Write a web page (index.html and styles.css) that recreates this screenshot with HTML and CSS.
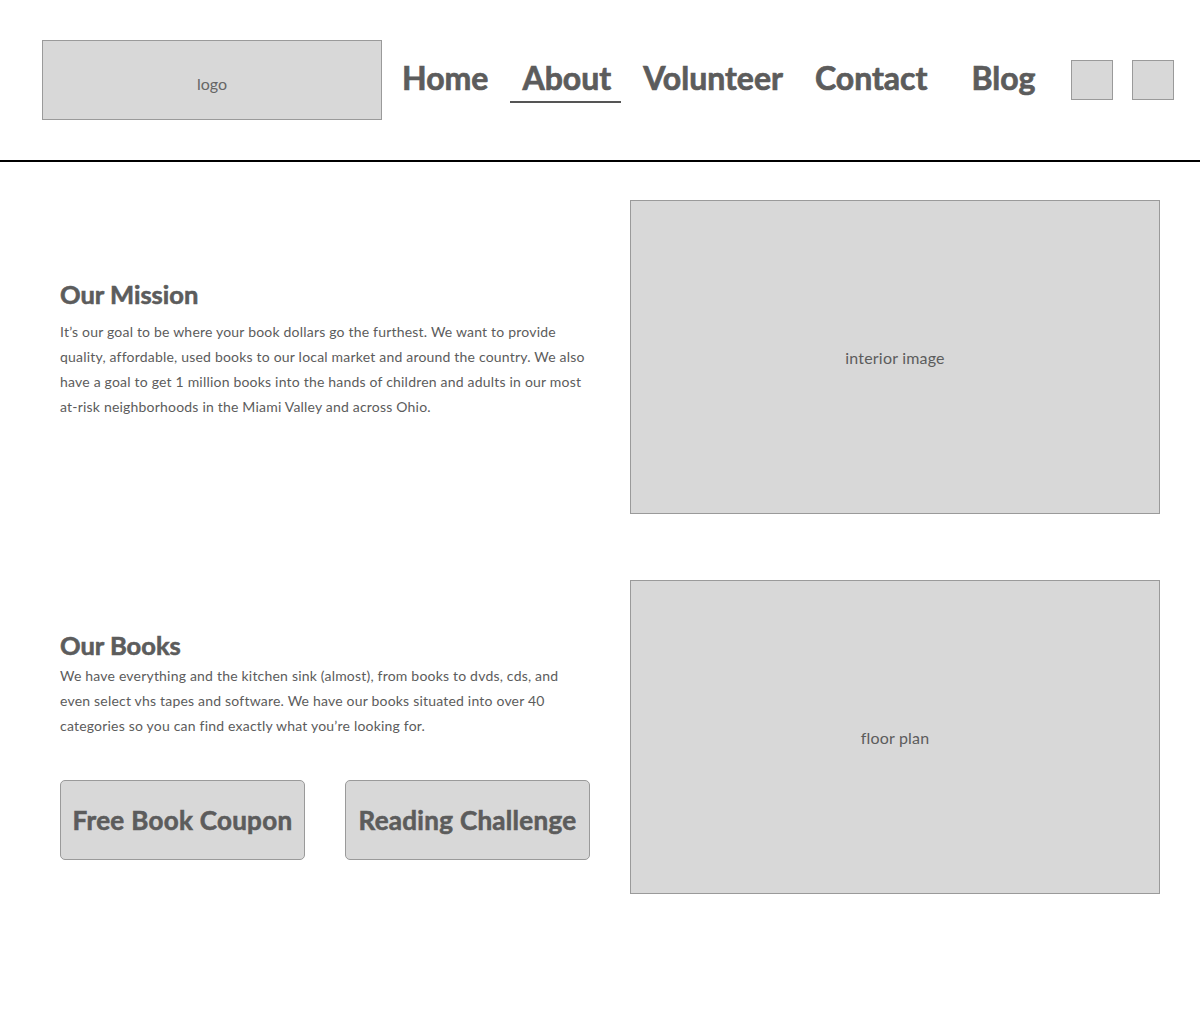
FILE: index.html
```html
<!DOCTYPE html>
<html lang="en">
<head>
<meta charset="utf-8">
<title>About</title>
<link rel="stylesheet" href="styles.css">
</head>
<body>
<header class="header">
  <div class="logo">logo</div>
  <nav class="nav">
    <a class="nav-link" href="#">Home</a>
    <a class="nav-link active" href="#">About</a>
    <a class="nav-link" href="#">Volunteer</a>
    <a class="nav-link" href="#">Contact</a>
    <a class="nav-link blog" href="#">Blog</a>
  </nav>
  <div class="icons">
    <span class="icon-box"></span>
    <span class="icon-box"></span>
  </div>
</header>
<main class="main">
  <section class="row row-mission">
    <div class="text text-mission">
      <h2 class="heading">Our Mission</h2>
      <p class="para">It’s our goal to be where your book dollars go the furthest. We want to provide quality, affordable, used books to our local market and around the country. We also have a goal to get 1 million books into the hands of children and adults in our most at-risk neighborhoods in the Miami Valley and across Ohio.</p>
    </div>
    <div class="placeholder">interior image</div>
  </section>
  <section class="row row-books">
    <div class="text text-books">
      <h2 class="heading heading-tight">Our Books</h2>
      <p class="para">We have everything and the kitchen sink (almost), from books to dvds, cds, and even select vhs tapes and software. We have our books situated into over 40 categories so you can find exactly what you’re looking for.</p>
      <div class="buttons">
        <a class="btn" href="#">Free Book Coupon</a>
        <a class="btn" href="#">Reading Challenge</a>
      </div>
    </div>
    <div class="placeholder">floor plan</div>
  </section>
</main>
</body>
</html>
```

FILE: styles.css
```css
* { box-sizing: border-box; }
html, body { margin: 0; padding: 0; background: #fff; }
body {
  font-family: "Lato", "Noto Sans", sans-serif;
  color: #5c5c5c;
  width: 1200px;
}
.header {
  height: 162px;
  border-bottom: 2px solid #000;
  display: flex;
  align-items: flex-start;
  padding: 40px 26px 0 42px;
}
.logo {
  width: 340px;
  height: 80px;
  background: #d8d8d8;
  border: 1px solid #9a9a9a;
  display: flex;
  align-items: center;
  justify-content: center;
  padding-top: 6px;
  font-size: 16px;
  color: #666;
}
.nav {
  display: flex;
  align-items: flex-start;
  margin-left: 10px;
  gap: 12px;
}
.nav-link {
  font-weight: 700;
  font-size: 32px;
  color: #5c5c5c;
  -webkit-text-stroke: 0.7px #5c5c5c;
  text-decoration: none;
  padding: 0 10px;
  line-height: 40px;
  margin-top: 18px;
  border-bottom: 2px solid transparent;
}
.nav-link.active {
  padding: 0 10px 3px 12px;
  border-bottom-color: #555;
}
.nav-link.blog { margin-left: 12px; }
.icons {
  display: flex;
  gap: 19px;
  margin-left: auto;
  padding-top: 20px;
}
.icon-box {
  display: block;
  width: 42px;
  height: 40px;
  background: #d8d8d8;
  border: 1px solid #9a9a9a;
}
.main {
  padding: 38px 40px 0 60px;
}
.row {
  display: flex;
  align-items: center;
  gap: 40px;
}
.row-books { margin-top: 66px; }
.text { width: 530px; }
.text-mission { padding-bottom: 18px; }
.text-books { padding-top: 14px; }
.heading {
  font-size: 25.5px;
  font-weight: 700;
  -webkit-text-stroke: 0.6px #5c5c5c;
  margin: 0 0 9px;
  line-height: 32px;
}
.heading-tight { margin: 0 0 2px; }
.para {
  width: 528px;
  font-size: 14px;
  letter-spacing: 0.2px;
  line-height: 25px;
  margin: 0;
  color: #5c5c5c;
}
.placeholder {
  width: 530px;
  height: 314px;
  background: #d8d8d8;
  border: 1px solid #9a9a9a;
  display: flex;
  align-items: center;
  justify-content: center;
  font-size: 16px;
  letter-spacing: 0.2px;
  color: #5c5c5c;
}
.buttons {
  display: flex;
  gap: 40px;
  margin-top: 42px;
}
.btn {
  width: 245px;
  height: 80px;
  background: #d8d8d8;
  border: 1px solid #9a9a9a;
  border-radius: 5px;
  display: flex;
  align-items: center;
  justify-content: center;
  font-weight: 700;
  font-size: 26px;
  letter-spacing: 0.3px;
  -webkit-text-stroke: 0.6px #5c5c5c;
  color: #5c5c5c;
  text-decoration: none;
  white-space: nowrap;
}
```
